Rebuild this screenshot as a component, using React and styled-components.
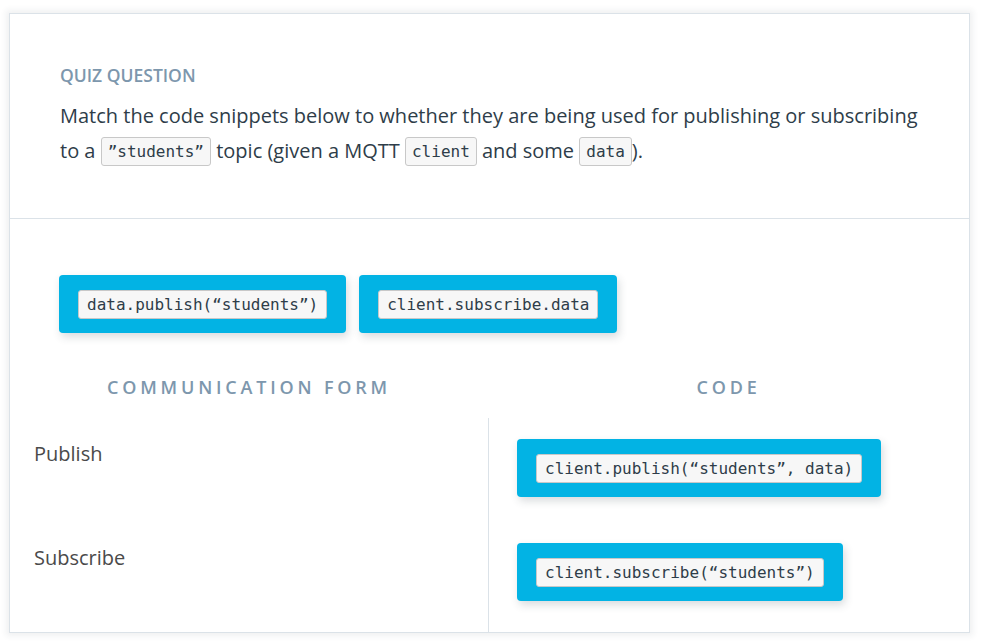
import styled, { createGlobalStyle } from 'styled-components'

const GlobalStyle = createGlobalStyle`
  html, body {
    margin: 0;
    padding: 0;
    background: #fff;
  }
  body {
    font-family: 'Open Sans', 'Noto Sans', sans-serif;
    color: #2e3d49;
  }
`

const Page = styled.div`
  padding: 13px 12px 10px 9px;
`

const Card = styled.section`
  width: 961px;
  box-sizing: border-box;
  background: #fff;
  border: 1px solid #dbe2e8;
  box-shadow: 0 0 6px 3px rgba(46, 61, 73, 0.07);
`

const Header = styled.header`
  padding: 49px 50px 50px;
  border-bottom: 1px solid #dbe2e8;
`

const Eyebrow = styled.h2`
  margin: 0 0 11px;
  font-size: 17.5px;
  line-height: 24px;
  font-weight: 600;
  color: #7d97ad;
  text-transform: uppercase;
`

const Question = styled.p`
  margin: 0;
  font-size: 20px;
  line-height: 35px;
  color: #2e3d49;
`

const InlineCode = styled.code`
  display: inline-block;
  font-family: 'DejaVu Sans Mono', 'Liberation Mono', monospace;
  font-size: 16px;
  line-height: 25px;
  padding: 1px 6px;
  background: #f7f7f7;
  border: 1px solid #c8c8c8;
  border-radius: 3px;
  color: #2e3d49;
  vertical-align: 1px;
`

const Body = styled.div`
  padding-top: 56px;
`

const Bank = styled.div`
  display: flex;
  gap: 13px;
  padding: 0 49px;
`

const Chip = styled.div`
  display: inline-flex;
  align-items: center;
  height: 58px;
  box-sizing: border-box;
  padding: 0 19px;
  background: #02b3e4;
  border-radius: 4px;
  box-shadow: 2px 4px 8px rgba(46, 61, 73, 0.18);
`

const ChipCode = styled.code`
  font-family: 'DejaVu Sans Mono', 'Liberation Mono', monospace;
  font-size: 16px;
  line-height: 25px;
  padding: 1px 8px;
  background: #f7f7f7;
  border: 1px solid #c8c8c8;
  border-radius: 3px;
  color: #2e3d49;
  white-space: pre;
`

const Columns = styled.div`
  display: grid;
  grid-template-columns: 478px 1fr;
`

const HeadRow = styled(Columns)`
  margin-top: 42px;
  margin-bottom: 19px;
`

const ColTitle = styled.div`
  text-align: center;
  font-size: 18px;
  line-height: 24px;
  font-weight: 600;
  letter-spacing: 3.8px;
  color: #7d97ad;
  text-transform: uppercase;
`

const LeftCol = styled.div`
  display: flex;
  flex-direction: column;
  padding-bottom: 6px;
`

const RightCol = styled(LeftCol)`
  border-left: 1px solid #dbe2e8;
`

const LabelCell = styled.div`
  height: 104px;
  box-sizing: border-box;
  padding: 22px 24px 0;
  font-size: 20px;
  line-height: 28px;
  color: #4a4a4a;
`

const DropCell = styled.div`
  height: 104px;
  box-sizing: border-box;
  padding: 21px 28px 0;
`

const bank = ['data.publish(“students”)', 'client.subscribe.data']

const rows = [
  { label: 'Publish', code: 'client.publish(“students”, data)' },
  { label: 'Subscribe', code: 'client.subscribe(“students”)' },
]

export default function App() {
  return (
    <Page>
      <GlobalStyle />
      <Card>
        <Header>
          <Eyebrow>Quiz Question</Eyebrow>
          <Question>
            Match the code snippets below to whether they are being used for publishing or subscribing
            to a <InlineCode>”students”</InlineCode> topic (given a MQTT <InlineCode>client</InlineCode> and
            some <InlineCode>data</InlineCode>).
          </Question>
        </Header>
        <Body>
          <Bank>
            {bank.map((c) => (
              <Chip key={c}>
                <ChipCode>{c}</ChipCode>
              </Chip>
            ))}
          </Bank>
          <HeadRow>
            <ColTitle>Communication Form</ColTitle>
            <ColTitle>Code</ColTitle>
          </HeadRow>
          <Columns>
            <LeftCol>
              {rows.map((r) => (
                <LabelCell key={r.label}>{r.label}</LabelCell>
              ))}
            </LeftCol>
            <RightCol>
              {rows.map((r) => (
                <DropCell key={r.code}>
                  <Chip>
                    <ChipCode>{r.code}</ChipCode>
                  </Chip>
                </DropCell>
              ))}
            </RightCol>
          </Columns>
        </Body>
      </Card>
    </Page>
  )
}
